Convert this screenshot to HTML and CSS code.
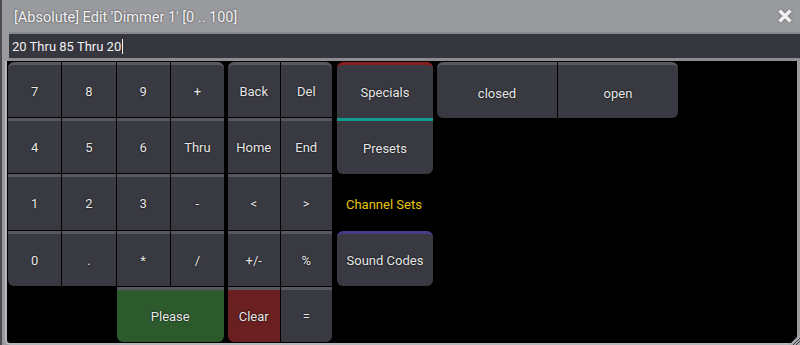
FILE: index.html
```html
<!DOCTYPE html>
<html lang="en">
<head>
  <meta charset="UTF-8">
  <title>Edit Dimmer 1</title>
  <link rel="stylesheet" href="styles.css">
</head>
<body>
  <div class="window">
    <div class="titlebar">
      <span class="title">[Absolute] Edit 'Dimmer 1' [0 .. 100]</span>
      <svg class="close" width="16" height="16" viewBox="0 0 16 16">
        <path d="M2.5 2.5 L13.5 13.5 M13.5 2.5 L2.5 13.5" />
      </svg>
    </div>
    <div class="cmdline">
      <span>20 Thru 85 Thru 20</span><span class="caret"></span>
    </div>
    <div class="content">
      <div class="numpad">
        <div class="key tl">7</div>
        <div class="key">8</div>
        <div class="key">9</div>
        <div class="key tr">+</div>
        <div class="key">4</div>
        <div class="key">5</div>
        <div class="key">6</div>
        <div class="key">Thru</div>
        <div class="key">1</div>
        <div class="key">2</div>
        <div class="key">3</div>
        <div class="key">-</div>
        <div class="key bl">0</div>
        <div class="key">.</div>
        <div class="key">*</div>
        <div class="key">/</div>
        <div class="blank"></div>
        <div class="blank"></div>
        <div class="key please">Please</div>
      </div>
      <div class="editpad">
        <div class="key tl">Back</div>
        <div class="key tr">Del</div>
        <div class="key">Home</div>
        <div class="key">End</div>
        <div class="key">&lt;</div>
        <div class="key">&gt;</div>
        <div class="key">+/-</div>
        <div class="key">%</div>
        <div class="key clear">Clear</div>
        <div class="key br">=</div>
      </div>
      <div class="tabs">
        <div class="key tab specials">Specials</div>
        <div class="key tab presets">Presets</div>
        <div class="tab-label">Channel Sets</div>
        <div class="key tab sound">Sound Codes</div>
      </div>
      <div class="values">
        <div class="key value first">closed</div>
        <div class="key value last">open</div>
      </div>
    </div>
    <svg class="grip" width="11" height="11" viewBox="0 0 11 11">
      <path class="grip-bg" d="M11 0 L11 11 L0 11 Z" />
      <path class="grip-line" d="M4 11 L11 4 M7 11 L11 7" />
    </svg>
  </div>
</body>
</html>
```

FILE: styles.css
```css
body {
  margin: 0;
  background-color: #000;
  font-family: Roboto, 'Liberation Sans', sans-serif;
}

.window {
  position: relative;
  width: 798px;
  height: 345px;
  border-left: 2px solid #4c4c50;
  background-color: #9a9b9f;
  overflow: hidden;
}

.titlebar {
  height: 32px;
  display: flex;
  align-items: center;
  justify-content: space-between;
  padding: 0 7px 0 12px;
}

.title {
  color: #f4f4f4;
  font-size: 14.5px;
  padding-top: 2px;
  text-shadow: 0 0 2px #333;
}

.close path {
  stroke: #f0f0f0;
  stroke-width: 3.6;
  fill: none;
}

.close {
  filter: drop-shadow(0 0 1px #555);
}

.cmdline {
  height: 24px;
  margin-left: 7px;
  border-top: 2px solid #87888c;
  border-bottom: 3px solid #8c8d91;
  background-color: #36363e;
  display: flex;
  align-items: center;
  padding-left: 3px;
  color: #f2f2f2;
  font-size: 13px;
}

.caret {
  width: 1px;
  height: 15px;
  margin-left: 1px;
  background-color: #f2f2f2;
}

.content {
  height: 281px;
  margin: 0 3px 0 3px;
  border-left: 2px solid #b6b7bb;
  border-bottom: 2px solid #b6b7bb;
  border-bottom-left-radius: 5px;
  background-color: #000;
  display: flex;
  align-items: flex-start;
  padding: 1px 0 0 1px;
  box-sizing: content-box;
}

.key {
  background-color: #393a41;
  border-top: 3px solid #57585d;
  color: #e8e8e8;
  font-size: 13px;
  text-shadow: 0 0 2px #000;
  display: flex;
  align-items: center;
  justify-content: center;
  padding-top: 1px;
}

.numpad,
.editpad {
  display: grid;
  grid-template-rows: repeat(5, 1fr);
  gap: 1px;
  height: 280px;
}

.numpad {
  width: 216px;
  grid-template-columns: repeat(4, 1fr);
}

.editpad {
  width: 104px;
  grid-template-columns: repeat(2, 1fr);
  margin-left: 4px;
}

.tl { border-top-left-radius: 6px; }
.tr { border-top-right-radius: 6px; }
.bl { border-bottom-left-radius: 6px; }
.br { border-bottom-right-radius: 6px; }

.please {
  grid-column: span 2;
  background-color: #2c5a2d;
  border-radius: 0 0 6px 6px;
}

.clear {
  background-color: #6a2020;
  border-bottom-left-radius: 6px;
}

.tabs {
  width: 96px;
  margin-left: 5px;
  display: grid;
  grid-template-rows: repeat(5, 56px);
}

.specials {
  border-top-color: #8a1d1d;
  border-radius: 6px 6px 0 0;
}

.presets {
  border-top-color: #0f9c8e;
  border-radius: 0 0 6px 6px;
}

.tab-label {
  color: #e8c70f;
  font-size: 13px;
  display: flex;
  align-items: center;
  padding: 4px 0 0 9px;
}

.sound {
  margin-top: 1px;
  border-top-color: #4a3a88;
  border-radius: 6px;
}

.values {
  margin-left: 4px;
  display: grid;
  grid-template-columns: 120px 120px;
  column-gap: 1px;
  height: 56px;
}

.value {
  padding-top: 4px;
}

.value.first { border-radius: 6px 0 0 6px; }
.value.last { border-radius: 0 6px 6px 0; }

.grip {
  position: absolute;
  right: 0;
  bottom: 0;
}

.grip-bg { fill: #a8a9ad; }

.grip-line {
  stroke: #3a3a3e;
  stroke-width: 1;
}
```
